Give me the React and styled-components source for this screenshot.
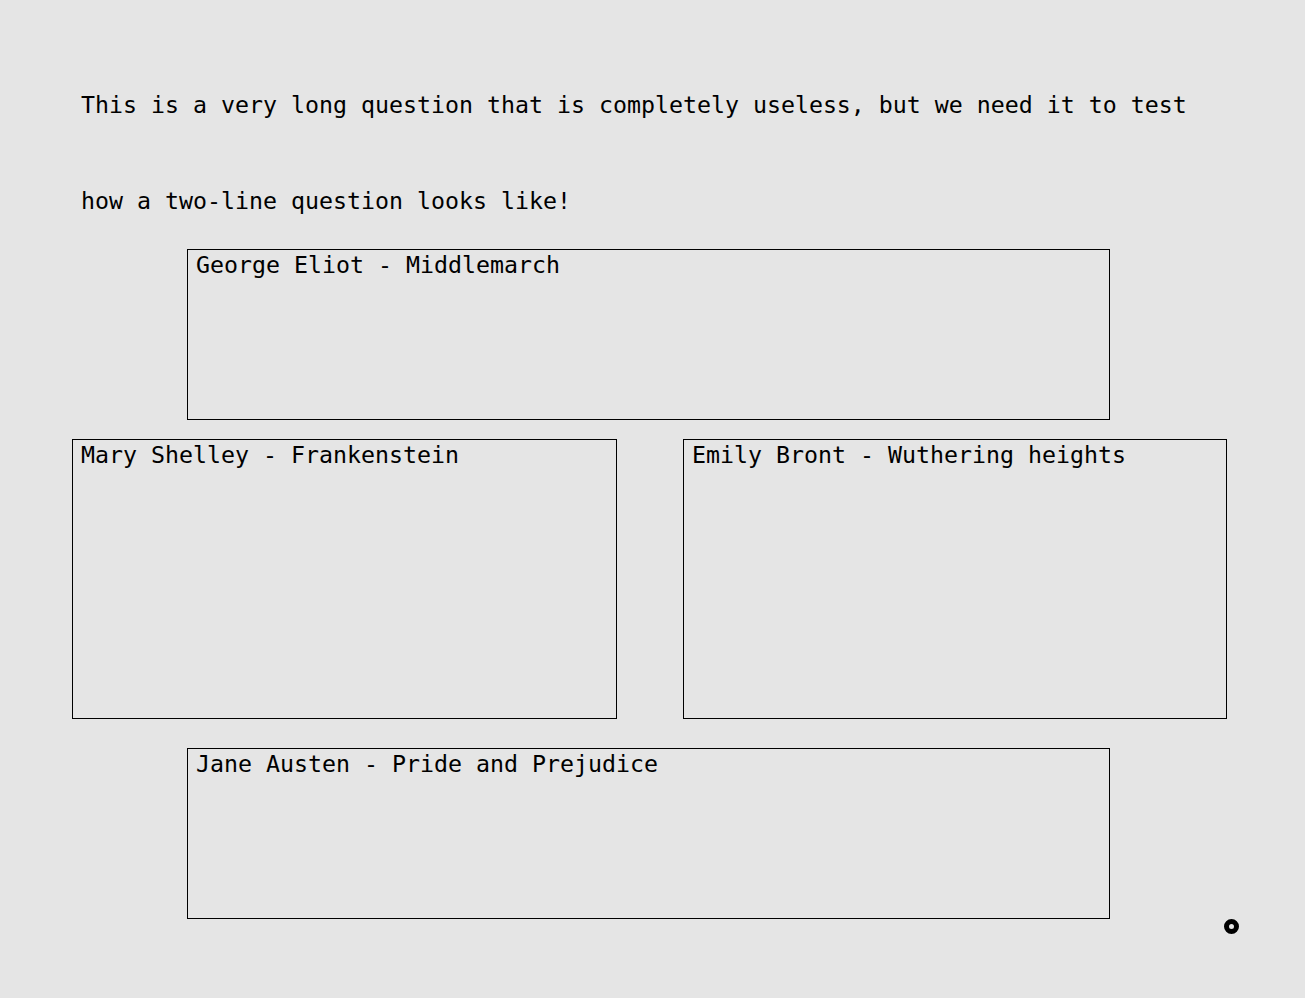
import React from "react";
import styled, { createGlobalStyle } from "styled-components";

const Global = createGlobalStyle`
  html, body {
    margin: 0;
    padding: 0;
    background: #e5e5e5;
  }
  body {
    font-family: "DejaVu Sans Mono", "Liberation Mono", monospace;
    color: #000;
    min-height: 998px;
  }
`;

const Page = styled.div`
  position: relative;
  width: 1305px;
  min-height: 998px;
  box-sizing: border-box;
  padding: 57px 0 0 72px;
`;

const Quiz = styled.div`
  width: 1155px;
  display: flex;
  flex-direction: column;
`;

const Question = styled.div`
  padding-left: 9px;
  font-size: 23.25px;
  line-height: 96px;
`;

const Row = styled.div`
  display: grid;
  grid-template-columns: 545px 544px;
  column-gap: 66px;
  margin: 19px 0 29px;
`;

const AnswerBox = styled.div`
  box-sizing: border-box;
  width: ${(p) => p.$w}px;
  height: ${(p) => p.$h}px;
  border: 1px solid #000;
  padding: 1px 8px 0;
  font-size: 23.25px;
  line-height: normal;
  margin-left: ${(p) => p.$ml || 0}px;
`;

const Cursor = styled.div`
  position: absolute;
  left: 1224px;
  top: 919px;
  width: 5px;
  height: 5px;
  border: 5px solid #000;
  border-radius: 50%;
  background: #e5e5e5;
`;

export default function App() {
  return (
    <>
      <Global />
      <Page>
        <Quiz>
          <Question>
            This is a very long question that is completely useless, but we need it to test how a two-line question looks like!
          </Question>
          <AnswerBox $w={923} $h={171} $ml={115}>George Eliot - Middlemarch</AnswerBox>
          <Row>
            <AnswerBox $w={545} $h={280}>Mary Shelley - Frankenstein</AnswerBox>
            <AnswerBox $w={544} $h={280}>Emily Bront - Wuthering heights</AnswerBox>
          </Row>
          <AnswerBox $w={923} $h={171} $ml={115}>Jane Austen - Pride and Prejudice</AnswerBox>
        </Quiz>
        <Cursor />
      </Page>
    </>
  );
}
